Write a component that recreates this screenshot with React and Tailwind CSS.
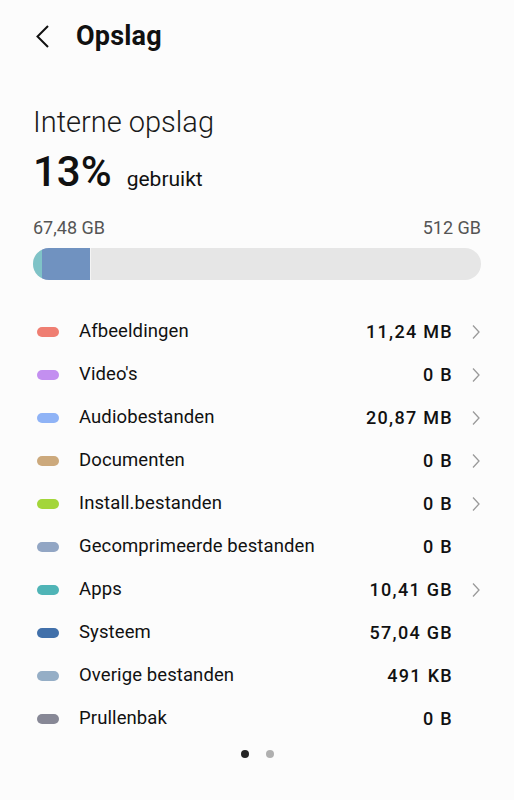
import React from 'react';

const items = [
  { name: 'Afbeeldingen', val: '11,24 MB', color: 'bg-[#ef7e72]', more: true },
  { name: "Video's", val: '0 B', color: 'bg-[#c38ff0]', more: true },
  { name: 'Audiobestanden', val: '20,87 MB', color: 'bg-[#8fb3f6]', more: true },
  { name: 'Documenten', val: '0 B', color: 'bg-[#cca97c]', more: true },
  { name: 'Install.bestanden', val: '0 B', color: 'bg-[#a3d63a]', more: true },
  { name: 'Gecomprimeerde bestanden', val: '0 B', color: 'bg-[#92a6c4]', more: false },
  { name: 'Apps', val: '10,41 GB', color: 'bg-[#4fb4b6]', more: true },
  { name: 'Systeem', val: '57,04 GB', color: 'bg-[#4170aa]', more: false },
  { name: 'Overige bestanden', val: '491 KB', color: 'bg-[#95aec6]', more: false },
  { name: 'Prullenbak', val: '0 B', color: 'bg-[#878896]', more: false },
];

function Chevron() {
  return (
    <svg width="10" height="16" viewBox="0 0 10 16" className="shrink-0">
      <path d="M2 1.5 L8 8 L2 14.5" fill="none" stroke="#9a9a9a" strokeWidth="1.3" />
    </svg>
  );
}

export default function App() {
  return (
    <div className="min-h-[800px] w-[514px] bg-[#fcfcfc] font-['Roboto',sans-serif] text-[#111]">
      {/* Header */}
      <div className="flex items-center h-[74px] pl-[35px]">
        <svg width="16" height="26" viewBox="0 0 16 26">
          <path d="M13 2 L2.5 12.5 L13 23" fill="none" stroke="#111" strokeWidth="2" />
        </svg>
        <h1 className="ml-[25px] text-[27px] font-bold tracking-[0.2px] mt-[-1px]">Opslag</h1>
      </div>

      <div className="px-[33px]">
        <div className="mt-[31px] text-[29px] font-light leading-[34px] text-[#1a1a1a]">Interne opslag</div>
        <div className="flex items-baseline mt-[7px]">
          <span className="text-[42px] font-medium leading-[52px]">13%</span>
          <span className="ml-[15px] text-[21px]">gebruikt</span>
        </div>

        <div className="flex justify-between mt-[20px] text-[18px] text-[#555] leading-[20px]">
          <span>67,48 GB</span>
          <span>512 GB</span>
        </div>

        <div className="mt-[10px] h-[32px] rounded-full bg-[#e6e6e6] overflow-hidden flex">
          <div className="w-[9px] bg-[#7fc3c7]" />
          <div className="w-[49px] bg-[#7092c0] border-r border-[#f4f4f4]" />
        </div>

        <div className="mt-[30px] flex flex-col">
          {items.map((it) => (
            <div key={it.name} className="flex items-center h-[43px]">
              <div className={`w-[22px] h-[10px] rounded-full ml-[4px] ${it.color}`} />
              <span className="ml-[20px] flex-1 text-[18.5px] tracking-[0.1px]">{it.name}</span>
              <span className="text-[18px] font-medium tracking-[1.3px]">{it.val}</span>
              <div className="w-[28px] flex justify-end">
                {it.more && <Chevron />}
              </div>
            </div>
          ))}
        </div>

        <div className="flex justify-center gap-[17px] mt-[10px]">
          <div className="w-[8px] h-[8px] rounded-full bg-[#252525]" />
          <div className="w-[8px] h-[8px] rounded-full bg-[#b0b0b0]" />
        </div>
      </div>
    </div>
  );
}
